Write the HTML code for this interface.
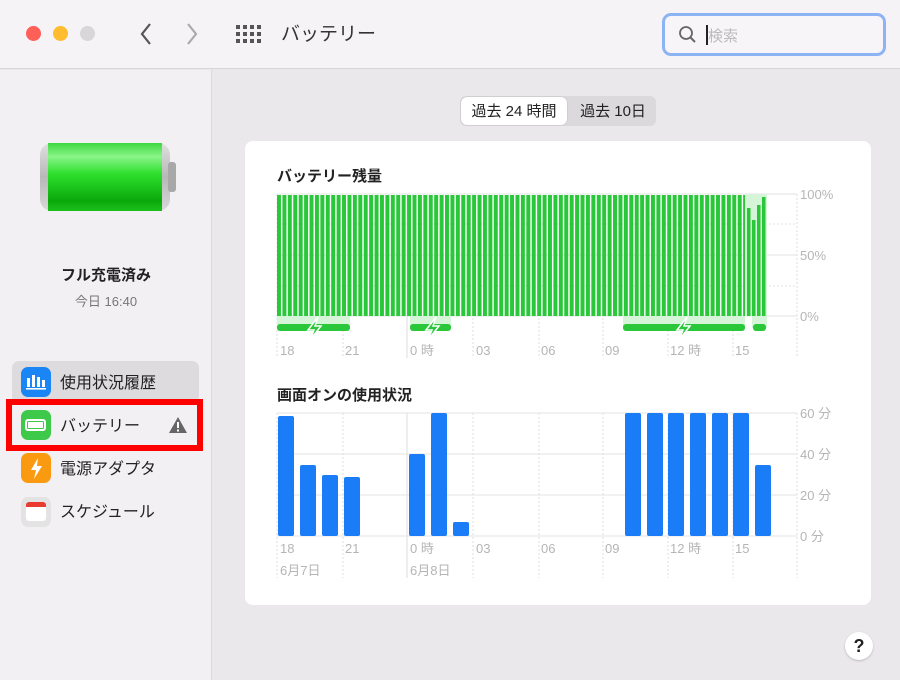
<!DOCTYPE html>
<html><head><meta charset="utf-8"><style>
*{margin:0;padding:0;box-sizing:border-box}
body{width:900px;height:680px;overflow:hidden;font-family:"Liberation Sans","Noto Sans CJK JP",sans-serif;background:#ebe8eb;position:relative;color:#222}
.a{position:absolute}
</style></head><body>
<div class="a" style="left:0;top:0;width:900px;height:69px;background:#f6f3f7;border-bottom:1px solid #d8d5d8"></div>
<div class="a" style="left:26px;top:26px;width:15px;height:15px;border-radius:50%;background:#fe5f57"></div>
<div class="a" style="left:53px;top:26px;width:15px;height:15px;border-radius:50%;background:#febc2e"></div>
<div class="a" style="left:80px;top:26px;width:15px;height:15px;border-radius:50%;background:#d9d6d9"></div>
<svg class="a" style="left:130px;top:20px" width="80" height="28"><path d="M20 4 L12 14 L20 24" stroke="#555" stroke-width="2.2" fill="none"/><path d="M58 4 L66 14 L58 24" stroke="#aaa" stroke-width="2.2" fill="none"/></svg>
<svg class="a" style="left:236px;top:25px" width="26" height="18"><g fill="#555"><rect x="0" y="0" width="4" height="4"/><rect x="7" y="0" width="4" height="4"/><rect x="14" y="0" width="4" height="4"/><rect x="21" y="0" width="4" height="4"/><rect x="0" y="7" width="4" height="4"/><rect x="7" y="7" width="4" height="4"/><rect x="14" y="7" width="4" height="4"/><rect x="21" y="7" width="4" height="4"/><rect x="0" y="14" width="4" height="4"/><rect x="7" y="14" width="4" height="4"/><rect x="14" y="14" width="4" height="4"/><rect x="21" y="14" width="4" height="4"/></g></svg>
<div class="a" style="left:281px;top:19px;font-size:19px;color:#333">バッテリー</div>
<div class="a" style="left:662px;top:13px;width:224px;height:43px;border:3px solid #8cb4f5;border-radius:9px;background:#f8f5f9"></div>
<svg class="a" style="left:678px;top:25px" width="20" height="20"><circle cx="8" cy="8" r="6" stroke="#666" stroke-width="1.8" fill="none"/><path d="M12.5 12.5 L17 17" stroke="#666" stroke-width="2"/></svg>
<div class="a" style="left:706px;top:25px;width:2px;height:20px;background:#222"></div>
<div class="a" style="left:708px;top:25px;font-size:15px;color:#bbb">検索</div>

<div class="a" style="left:0;top:70px;width:212px;height:610px;background:#f3f0f3;border-right:1px solid #dcd9dc"></div>
<svg class="a" style="left:38px;top:140px" width="140" height="74"><defs><linearGradient id="g" x1="0" y1="0" x2="0" y2="1"><stop offset="0" stop-color="#3ed83e"/><stop offset="0.2" stop-color="#8af58a"/><stop offset="0.45" stop-color="#2ee02e"/><stop offset="0.85" stop-color="#0aa80a"/><stop offset="1" stop-color="#1cc01c"/></linearGradient><linearGradient id="s" x1="0" y1="0" x2="0" y2="1"><stop offset="0" stop-color="#e0e0e0"/><stop offset="0.5" stop-color="#b8b8b8"/><stop offset="1" stop-color="#d8d8d8"/></linearGradient></defs><rect x="2" y="3" width="130" height="68" rx="12" fill="url(#s)"/><rect x="10" y="3" width="114" height="68" fill="url(#g)"/><rect x="130" y="22" width="8" height="30" rx="3" fill="#a8a8a8"/></svg>
<div class="a" style="left:0;top:264px;width:212px;text-align:center;font-size:15px;font-weight:bold">フル充電済み</div>
<div class="a" style="left:0;top:291px;width:212px;text-align:center;font-size:13px;color:#777">今日 16:40</div>

<div class="a" style="left:12px;top:361px;width:187px;height:42px;background:#dedbde;border-radius:7px"></div>
<div class="a" style="left:21px;top:367px;width:30px;height:30px;border-radius:7px;background:#1a86f5"></div>
<svg class="a" style="left:24px;top:372px" width="24" height="20"><g fill="#fff"><rect x="3" y="6" width="3" height="9"/><rect x="8" y="3" width="3" height="12"/><rect x="13" y="5" width="3" height="10"/><rect x="18" y="8" width="3" height="7"/><rect x="2" y="16" width="20" height="1.6"/></g></svg>
<div class="a" style="left:60px;top:369px;font-size:16px">使用状況履歴</div>
<div class="a" style="left:6px;top:399px;width:197px;height:52px;border:6px solid #f00"></div>
<div class="a" style="left:21px;top:410px;width:30px;height:30px;border-radius:7px;background:#3ec94a"></div>
<div class="a" style="left:25px;top:419px;width:21px;height:12px;border:2px solid #fff;border-radius:3px;background:#fff;box-shadow:inset 0 0 0 1px #3ec94a"></div>
<div class="a" style="left:60px;top:412px;font-size:16px">バッテリー</div>
<svg class="a" style="left:168px;top:416px" width="20" height="18"><path d="M10 1 L19 17 L1 17 Z" fill="#666"/><rect x="9" y="6" width="2" height="6" fill="#fff"/><rect x="9" y="13.5" width="2" height="2" fill="#fff"/></svg>
<div class="a" style="left:21px;top:453px;width:30px;height:30px;border-radius:7px;background:#fa9a10"></div>
<svg class="a" style="left:21px;top:453px" width="30" height="30"><path d="M17 5 L10 17 L15 17 L13 26 L21 13 L16 13 Z" fill="#fff"/></svg>
<div class="a" style="left:60px;top:455px;font-size:16px">電源アダプタ</div>
<div class="a" style="left:21px;top:497px;width:30px;height:30px;border-radius:7px;background:#e3e3e3"></div>
<div class="a" style="left:26px;top:502px;width:20px;height:19px;border-radius:3px;background:#fff;border-top:5px solid #e83a30"></div>
<div class="a" style="left:60px;top:498px;font-size:16px">スケジュール</div>

<div class="a" style="left:460px;top:96px;width:196px;height:30px;background:#dcd9dc;border-radius:6px"></div>
<div class="a" style="left:461px;top:97px;width:106px;height:28px;background:#fff;border-radius:6px;box-shadow:0 0 1px #999"></div>
<div class="a" style="left:461px;top:100px;width:106px;text-align:center;font-size:15px">過去 24 時間</div>
<div class="a" style="left:570px;top:100px;width:86px;text-align:center;font-size:15px">過去 10日</div>

<div class="a" style="left:245px;top:141px;width:626px;height:464px;background:#fff;border-radius:8px"></div>
<div class="a" style="left:277px;top:165px;font-size:15px;font-weight:bold">バッテリー残量</div>
<div class="a" style="left:277px;top:384px;font-size:15px;font-weight:bold">画面オンの使用状況</div>

<svg class="a" style="left:0;top:0" width="900" height="680" font-family="Liberation Sans, Noto Sans CJK JP, sans-serif" font-size="13" fill="#b5b5b5">
<defs><pattern id="p" x="277" y="0" width="5.42" height="10" patternUnits="userSpaceOnUse"><rect x="0" y="0" width="4" height="10" fill="#2ac73a"/></pattern></defs>
<g stroke="#ddd" stroke-dasharray="2 2"><line x1="277" y1="194" x2="277" y2="358"/><line x1="343" y1="194" x2="343" y2="358"/><line x1="473" y1="194" x2="473" y2="358"/><line x1="539" y1="194" x2="539" y2="358"/><line x1="603" y1="194" x2="603" y2="358"/><line x1="668" y1="194" x2="668" y2="358"/><line x1="733" y1="194" x2="733" y2="358"/><line x1="797" y1="194" x2="797" y2="358"/>
<line x1="277" y1="413" x2="277" y2="578"/><line x1="343" y1="413" x2="343" y2="578"/><line x1="473" y1="413" x2="473" y2="578"/><line x1="539" y1="413" x2="539" y2="578"/><line x1="603" y1="413" x2="603" y2="578"/><line x1="668" y1="413" x2="668" y2="578"/><line x1="733" y1="413" x2="733" y2="578"/><line x1="797" y1="413" x2="797" y2="578"/></g>
<g stroke="#ddd"><line x1="407" y1="194" x2="407" y2="358"/><line x1="407" y1="413" x2="407" y2="578"/></g>
<g stroke="#e3e3e3" stroke-width="1"><line x1="277" y1="194" x2="797" y2="194"/><line x1="277" y1="255" x2="797" y2="255"/><line x1="277" y1="316" x2="797" y2="316"/><line x1="277" y1="224" x2="797" y2="224" stroke-dasharray="2 2"/><line x1="277" y1="286" x2="797" y2="286" stroke-dasharray="2 2"/></g>
<g fill="#d6f5d8"><rect x="277" y="316" width="73" height="12"/><rect x="410" y="316" width="41" height="12"/><rect x="623" y="316" width="122" height="12"/><rect x="752" y="316" width="15" height="12"/><rect x="745" y="194" width="22" height="122"/></g>
<rect x="277" y="195" width="468" height="121" fill="url(#p)"/>
<g fill="#2ac73a"><rect x="747" y="208" width="3.5" height="108"/><rect x="752" y="220" width="3.5" height="96"/><rect x="757" y="205" width="3.5" height="111"/><rect x="762" y="197" width="3.5" height="119"/>
<rect x="277" y="324" width="73" height="7" rx="3"/><rect x="410" y="324" width="41" height="7" rx="3"/><rect x="623" y="324" width="122" height="7" rx="3"/><rect x="753" y="324" width="13" height="7" rx="3"/></g>
<g fill="#2ac73a" stroke="#fff" stroke-width="1.5"><path d="M318 317 L308 330 L314 330 L310 340 L321 326 L315 326 Z"/><path d="M436 317 L426 330 L432 330 L428 340 L439 326 L433 326 Z"/><path d="M687 317 L677 330 L683 330 L679 340 L690 326 L684 326 Z"/></g>
<text x="800" y="199">100%</text><text x="800" y="260">50%</text><text x="800" y="321">0%</text>
<text x="280" y="355">18</text><text x="345" y="355">21</text><text x="410" y="355">0 時</text><text x="476" y="355">03</text><text x="541" y="355">06</text><text x="605" y="355">09</text><text x="670" y="355">12 時</text><text x="735" y="355">15</text>
<g stroke="#e3e3e3"><line x1="277" y1="413" x2="797" y2="413"/><line x1="277" y1="454" x2="797" y2="454"/><line x1="277" y1="495" x2="797" y2="495"/><line x1="277" y1="536" x2="797" y2="536"/></g>
<g fill="#1a7cf7"><rect x="278" y="416" width="16" height="120" rx="2"/><rect x="300" y="465" width="16" height="71" rx="2"/><rect x="322" y="475" width="16" height="61" rx="2"/><rect x="344" y="477" width="16" height="59" rx="2"/><rect x="409" y="454" width="16" height="82" rx="2"/><rect x="431" y="413" width="16" height="123" rx="2"/><rect x="453" y="522" width="16" height="14" rx="2"/><rect x="625" y="413" width="16" height="123" rx="2"/><rect x="647" y="413" width="16" height="123" rx="2"/><rect x="668" y="413" width="16" height="123" rx="2"/><rect x="690" y="413" width="16" height="123" rx="2"/><rect x="712" y="413" width="16" height="123" rx="2"/><rect x="733" y="413" width="16" height="123" rx="2"/><rect x="755" y="465" width="16" height="71" rx="2"/></g>
<text x="800" y="418">60 分</text><text x="800" y="459">40 分</text><text x="800" y="500">20 分</text><text x="800" y="541">0 分</text>
<text x="280" y="553">18</text><text x="345" y="553">21</text><text x="410" y="553">0 時</text><text x="476" y="553">03</text><text x="541" y="553">06</text><text x="605" y="553">09</text><text x="670" y="553">12 時</text><text x="735" y="553">15</text>
<text x="280" y="575">6月7日</text><text x="410" y="575">6月8日</text>
</svg>
<div class="a" style="left:845px;top:632px;width:28px;height:28px;border-radius:50%;background:#fff;box-shadow:0 1px 2px #bbb;text-align:center;font-size:18px;line-height:28px;font-weight:bold">?</div>
</body></html>
